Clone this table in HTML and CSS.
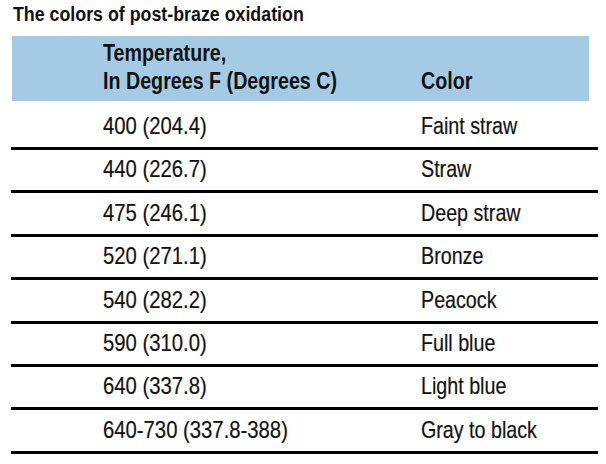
FILE: index.html
```html
<!DOCTYPE html>
<html lang="en">
<head>
  <meta charset="UTF-8" />
  <title>The colors of post-braze oxidation</title>
  <link rel="stylesheet" href="styles.css">
</head>
<body>
  <h1 class="title"><span class="narrow">The colors of post-braze oxidation</span></h1>

  <div class="oxide-table">
    <div class="head">
      <div class="col-temp"><span class="narrow">Temperature,<br>In Degrees F (Degrees C)</span></div>
      <div class="col-color"><span class="narrow">Color</span></div>
    </div>

    <div class="row first">
      <div class="col-temp"><span class="narrow">400 (204.4)</span></div>
      <div class="col-color"><span class="narrow">Faint straw</span></div>
    </div>
    <div class="row">
      <div class="col-temp"><span class="narrow">440 (226.7)</span></div>
      <div class="col-color"><span class="narrow">Straw</span></div>
    </div>
    <div class="row">
      <div class="col-temp"><span class="narrow">475 (246.1)</span></div>
      <div class="col-color"><span class="narrow">Deep straw</span></div>
    </div>
    <div class="row">
      <div class="col-temp"><span class="narrow">520 (271.1)</span></div>
      <div class="col-color"><span class="narrow">Bronze</span></div>
    </div>
    <div class="row">
      <div class="col-temp"><span class="narrow">540 (282.2)</span></div>
      <div class="col-color"><span class="narrow">Peacock</span></div>
    </div>
    <div class="row">
      <div class="col-temp"><span class="narrow">590 (310.0)</span></div>
      <div class="col-color"><span class="narrow">Full blue</span></div>
    </div>
    <div class="row">
      <div class="col-temp"><span class="narrow">640 (337.8)</span></div>
      <div class="col-color"><span class="narrow">Light blue</span></div>
    </div>
    <div class="row">
      <div class="col-temp"><span class="narrow">640-730 (337.8-388)</span></div>
      <div class="col-color"><span class="narrow">Gray to black</span></div>
    </div>
  </div>
</body>
</html>
```

FILE: styles.css
```css
/* base */
* {
  margin: 0;
  padding: 0;
  box-sizing: border-box;
}
body {
  width: 606px;
  height: 464px;
  overflow: hidden;
  background: #ffffff;
  color: #111111;
  font-family: "Liberation Sans", Arial, sans-serif;
}

/* no condensed face is installed, so squeeze Arial like Arial Narrow */
.narrow {
  display: inline-block;
  white-space: nowrap;
  transform: scaleX(0.82);
  transform-origin: left center;
}

/* caption */
.title {
  font-size: 20px;
  font-weight: 700;
  line-height: 22px;
  padding: 3px 0 0 13px;
  height: 36px;
}
.title .narrow {
  transform: scaleX(0.89);
}

/* table */
.oxide-table {
  width: 587px;
  margin-left: 11px;
}
.head {
  display: flex;
  align-items: flex-end;
  height: 65px;
  margin: 0 9px 0 1px;
  padding: 0 0 6px 91px;
  background: #a4cbe3;
  font-size: 24px;
  font-weight: 700;
  line-height: 28px;
}
.col-temp {
  width: 318px;
}
.row {
  display: flex;
  align-items: flex-end;
  height: 43.4px;
  padding: 0 0 9px 92px;
  border-bottom: 3px solid #000000;
  font-size: 24px;
  line-height: 24px;
  -webkit-text-stroke: 0.2px #111111;
}
.row .col-temp .narrow {
  transform: scaleX(0.845);
}
.row.first {
  height: 49px;
}
```
